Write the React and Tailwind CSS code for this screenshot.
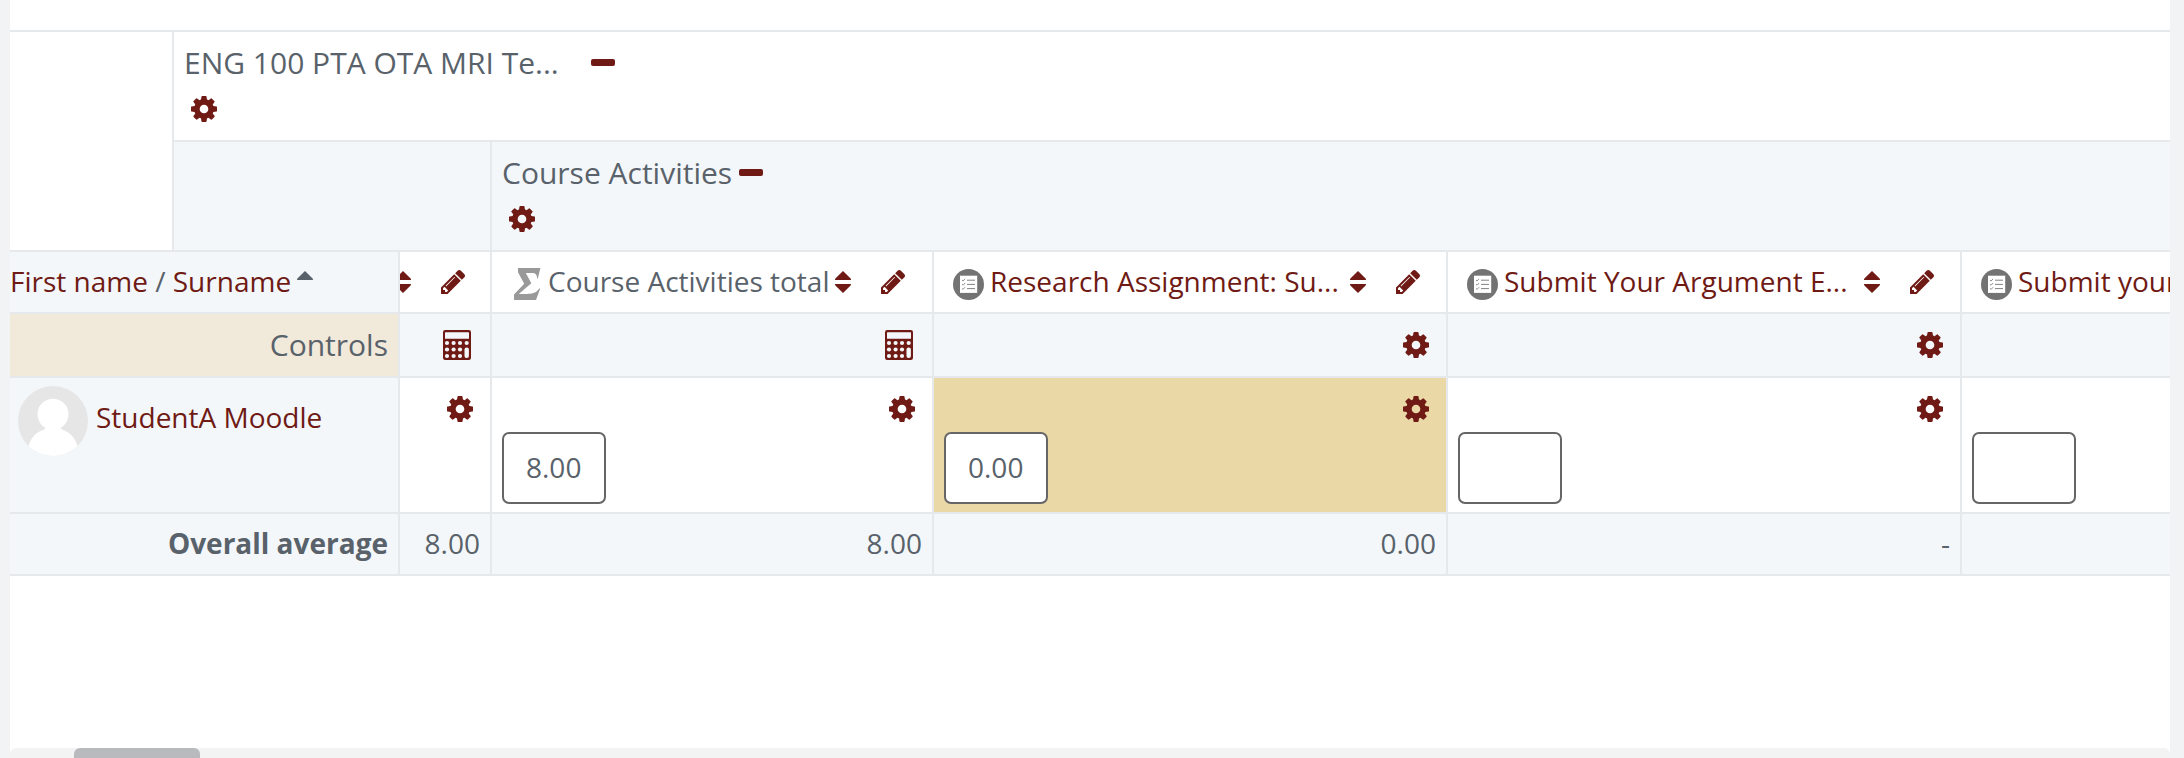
import clsx from 'clsx';

const Cog = ({ className }) => (
  <svg viewBox="0 128 1536 1536" fill="currentColor" className={clsx('h-[26px] w-[26px] shrink-0 text-[#6f1a14]', className)}>
    <path d="M1024 896q0-106-75-181t-181-75-181 75-75 181 75 181 181 75 181-75 75-181zm512-109v222q0 12-8 23t-20 13l-185 28q-19 54-39 91 35 50 107 138 10 12 10 25t-9 23q-27 37-99 108t-94 71q-12 0-26-9l-138-108q-44 23-91 38-16 136-29 186-7 28-36 28h-222q-14 0-24.5-8.5t-11.5-21.5l-28-184q-49-16-90-37l-141 107q-10 9-25 9-14 0-25-11-126-114-165-168-7-10-7-23 0-12 8-23 15-21 51-66.5t54-70.5q-27-50-41-99l-183-27q-13-2-21-12.5t-8-23.5v-222q0-12 8-23t19-13l186-28q14-46 39-92-40-57-107-138-10-12-10-24 0-10 9-23 26-36 98.5-107.5t94.5-71.5q13 0 26 10l138 107q44-23 91-38 16-136 29-186 7-28 36-28h222q14 0 24.5 8.5t11.5 21.5l28 184q49 16 90 37l142-107q9-9 24-9 13 0 25 10 129 119 165 170 7 8 7 22 0 12-8 23-15 21-51 66.5t-54 70.5q26 50 41 98l183 28q13 2 21 12.5t8 23.5z" />
  </svg>
);

const Pencil = ({ className }) => (
  <svg viewBox="128 149 1515 1515" fill="currentColor" className={clsx('h-6 w-6 shrink-0 text-[#6f1a14]', className)}>
    <path d="M491 1536l91-91-235-235-91 91v107h128v128h107zm523-928q0-22-22-22-10 0-17 7l-542 542q-7 7-7 17 0 22 22 22 10 0 17-7l542-542q7-7 7-17zm-54-192l416 416-832 832h-416v-416zm683 96q0 53-37 90l-166 166-416-416 166-165q36-38 90-38 53 0 91 38l235 234q37 39 37 91z" />
  </svg>
);

const Sort = ({ className }) => (
  <svg viewBox="0 0 16 22" fill="currentColor" className={clsx('h-[22px] w-4 shrink-0 text-[#6f1a14]', className)}>
    <path d="M8 0 L15.6 7.6 Q16 8 16 9 H0 Q0 8 .4 7.6 Z M0 13 H16 Q16 14 15.6 14.4 L8 22 L.4 14.4 Q0 14 0 13 Z" />
  </svg>
);

const Minus = ({ className }) => (
  <span className={clsx('h-[7px] w-6 shrink-0 rounded-[2px] bg-[#6f1a14]', className)} />
);

const Calculator = () => (
  <svg viewBox="0 0 28 30" className="h-[30px] w-7 shrink-0">
    <rect width="28" height="30" rx="2.2" fill="#6f1a14" />
    <g fill="#f3f7fa">
      <rect x="2" y="2.2" width="24" height="6.6" rx="0.6" />
      {[4, 10.6, 17].map((x) => [13, 19.5, 26].map((y) => <circle key={`${x}-${y}`} cx={x} cy={y} r="2.1" />))}
      <circle cx="23.7" cy="13" r="2.1" />
      <rect x="21.5" y="17.6" width="4.4" height="10.4" rx="2" />
    </g>
  </svg>
);

const Sigma = ({ className }) => (
  <svg viewBox="0 0 27 32" fill="#999999" className={clsx('h-8 w-[27px] shrink-0', className)}>
    <path d="M4 0 H26.4 L23.8 10.6 H23.2 C23 6.5 21.5 5 18 5 H11.8 L17.3 15.2 L4.8 26 H13 C19 26 22 25 25.2 20.6 H26.2 L22 32 H0 V26.6 L10.2 15.8 L4 4.2 Z" />
  </svg>
);

const Checklist = ({ className }) => (
  <svg viewBox="0 0 31 31" className={clsx('h-[31px] w-[31px] shrink-0', className)}>
    <circle cx="15.5" cy="15.5" r="15.5" fill="#737373" />
    <rect x="7" y="6.7" width="17.2" height="17.2" fill="#ffffff" />
    <g fill="none" stroke="#737373">
      <path d="M14 11.2 H22 M14 15.4 H22 M14 19.6 H22" strokeWidth="0.9" />
      <path d="M9 11 l1.1 1 l2-2.2 M9 15.2 l1.1 1 l2-2.2 M9 19.4 l1.1 1 l2-2.2" strokeWidth="0.8" />
    </g>
  </svg>
);

const Avatar = () => (
  <svg viewBox="0 0 70 70" className="mt-2 ml-2 h-[70px] w-[70px] shrink-0">
    <clipPath id="avatar">
      <circle cx="35" cy="35" r="35" />
    </clipPath>
    <g clipPath="url(#avatar)">
      <rect width="70" height="70" fill="#e6e6e6" />
      <g fill="#ffffff">
        <circle cx="35" cy="28.3" r="15.5" />
        <path d="M28 38 H42 C42 42 43 43.5 46 44.5 C53 47 58 53 60 62 V72 H10 V62 C12 53 17 47 24 44.5 C27 43.5 28 42 28 38 Z" />
      </g>
    </g>
  </svg>
);

const columns = [
  { id: 'course', width: 'w-[92px]', edit: 'mr-[25px]', total: true, average: '8.00' },
  { id: 'activities', width: 'w-[442px]', edit: 'mr-[27px]', total: true, title: 'Course Activities total', grade: '8.00', average: '8.00' },
  { id: 'research', width: 'w-[514px]', edit: 'mr-[26px]', title: 'Research Assignment: Su...', grade: '0.00', average: '0.00', overridden: true },
  { id: 'argument', width: 'w-[514px]', edit: 'mr-[26px]', title: 'Submit Your Argument E...', grade: '', average: '-' },
  { id: 'last', width: 'w-[514px]', title: 'Submit your', grade: '', average: '' },
];

const line = 'border-[#e5e9eb]';

const Row = ({ height, children }) => (
  <div className={clsx('flex overflow-hidden border-t-2', line, height)}>{children}</div>
);

const Cell = ({ column, className, children }) => (
  <div className={clsx('flex shrink-0 overflow-hidden border-l-2', line, column.width, className)}>{children}</div>
);

const CategoryHeader = ({ title, gap }) => (
  <div className="pt-2 pl-2.5">
    <div className="flex h-[45px] items-center text-[30px]">
      {title}
      <Minus className={gap} />
    </div>
    <Cog className="mt-[11px] ml-[7px]" />
  </div>
);

const App = () => (
  <div className="h-[758px] w-[2184px] overflow-hidden bg-[#f2f3f5] pr-3.5 pl-2.5 font-['Open_Sans',sans-serif] text-[28px] leading-[45px] whitespace-nowrap text-[#59626a]">
    <div className="flex h-full flex-col overflow-hidden bg-white pt-[30px]">
      {/* Category rows */}
      <div className={clsx('flex h-[220px] border-t-2', line)}>
        <div className="w-[162px] shrink-0" />
        <div className={clsx('flex grow flex-col border-l-2', line)}>
          <div className="h-[108px]">
            <CategoryHeader title="ENG 100 PTA OTA MRI Te..." gap="ml-8" />
          </div>
          <div className={clsx('flex h-[110px] border-t-2 bg-[#f3f7fa]', line)}>
            <div className="w-[316px] shrink-0" />
            <div className={clsx('grow border-l-2', line)}>
              <CategoryHeader title="Course Activities" gap="ml-[7px]" />
            </div>
          </div>
        </div>
      </div>

      {/* Column headings */}
      <Row height="h-[62px]">
        <div className="flex w-[388px] shrink-0 bg-[#f3f7fa] pt-[7px]">
          <span className="text-[#6f1a14]">First name</span>
          <span className="whitespace-pre"> / </span>
          <span className="text-[#6f1a14]">Surname</span>
          <svg viewBox="0 0 16 9" fill="currentColor" className="mt-3 ml-1.5 h-[9px] w-4">
            <path d="M8 0 L15.6 7.6 Q16 8 16 9 H0 Q0 8 .4 7.6 Z" />
          </svg>
        </div>
        {columns.map((col) => (
          <Cell key={col.id} column={col} className="justify-end">
            {col.title && (
              <div className="flex grow pt-[7px]">
                {col.total ? <Sigma className="mt-[9px] ml-[22px]" /> : <Checklist className="mt-2.5 ml-[19px]" />}
                <span className={clsx(col.total ? 'ml-[7px]' : 'ml-1.5 text-[#6f1a14]')}>{col.title}</span>
              </div>
            )}
            {col.edit && (
              <>
                <Sort className="mt-[19px]" />
                <Pencil className={clsx('mt-[18px] ml-[30px]', col.edit)} />
              </>
            )}
          </Cell>
        ))}
      </Row>

      {/* Controls */}
      <Row height="h-16">
        <div className="w-[388px] shrink-0 bg-[#f1e9da] pt-2 pr-2.5 text-right text-[30px]">Controls</div>
        {columns.map((col) => (
          <Cell key={col.id} column={col} className="items-center justify-end bg-[#f3f7fa]">
            {col.total ? <span className="mr-[19px]"><Calculator /></span> : <Cog className="mr-[17px]" />}
          </Cell>
        ))}
      </Row>

      {/* Student grades */}
      <Row height="h-[136px]">
        <div className="flex w-[388px] shrink-0 bg-[#f3f7fa]">
          <Avatar />
          <span className="mt-[17px] ml-2 text-[#6f1a14]">StudentA Moodle</span>
        </div>
        {columns.map((col) => (
          <Cell key={col.id} column={col} className={clsx('justify-between', col.overridden && 'bg-[#ebd8a7]')}>
            {col.grade === undefined ? (
              <span />
            ) : (
              <input
                readOnly
                value={col.grade}
                className="mt-[54px] ml-2.5 h-[72px] w-[104px] rounded-[7px] border-2 border-[#666666] bg-white px-[22px] pb-0.5 outline-none"
              />
            )}
            <Cog className="mt-[18px] mr-[17px]" />
          </Cell>
        ))}
      </Row>

      {/* Averages */}
      <Row height="h-[62px]">
        <div className="w-[388px] shrink-0 bg-[#f3f7fa] pt-[7px] pr-2.5 text-right font-bold">Overall average</div>
        {columns.map((col) => (
          <Cell key={col.id} column={col} className="justify-end bg-[#f3f7fa] pt-[7px] pr-2.5">
            {col.average}
          </Cell>
        ))}
      </Row>
      <div className={clsx('border-t-2', line)} />

      {/* Horizontal scrollbar */}
      <div className="mt-auto h-2.5 shrink-0 rounded-t-md bg-[#f3f3f3] pl-16">
        <div className="h-full w-[126px] rounded-t-md bg-[#b9babd]" />
      </div>
    </div>
  </div>
);

export default App;
